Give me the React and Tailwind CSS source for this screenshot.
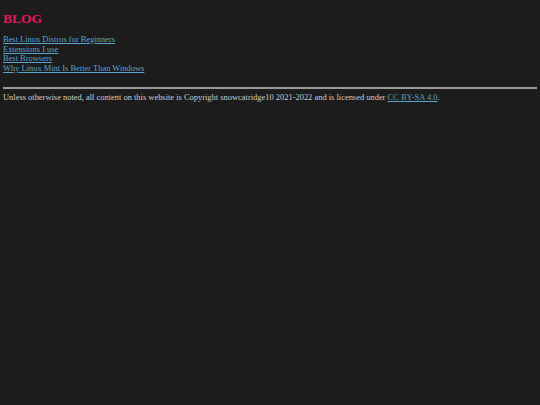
export default function App() {
  const posts = [
    'Best Linux Distros for Beginners',
    'Extensions I use',
    'Best Browsers',
    'Why Linux Mint Is Better Than Windows',
  ];
  return (
    <div className="min-h-[405px] bg-[#1c1c1c] px-[3px] pt-[11px] text-[8.45px] leading-[9.7px] text-[#cfcfcf] font-['Liberation_Serif',serif]">
      <h1 className="text-[13.5px] leading-[15px] font-bold text-[#e0165e]">BLOG</h1>
      <ul className="mt-[9px]">
        {posts.map((p) => (
          <li key={p}>
            <a href="#" className="text-[#5aa2cc] underline">{p}</a>
          </li>
        ))}
      </ul>
      <hr className="mt-[13px] border-0 border-t-2 border-[#9a9a9a]" />
      <p className="mt-[4px]">
        Unless otherwise noted, all content on this website is Copyright snowcatridge10 2021-2022 and is licensed under{' '}
        <a href="#" className="text-[#5aa2cc] underline">CC BY-SA 4.0</a>.
      </p>
    </div>
  );
}
